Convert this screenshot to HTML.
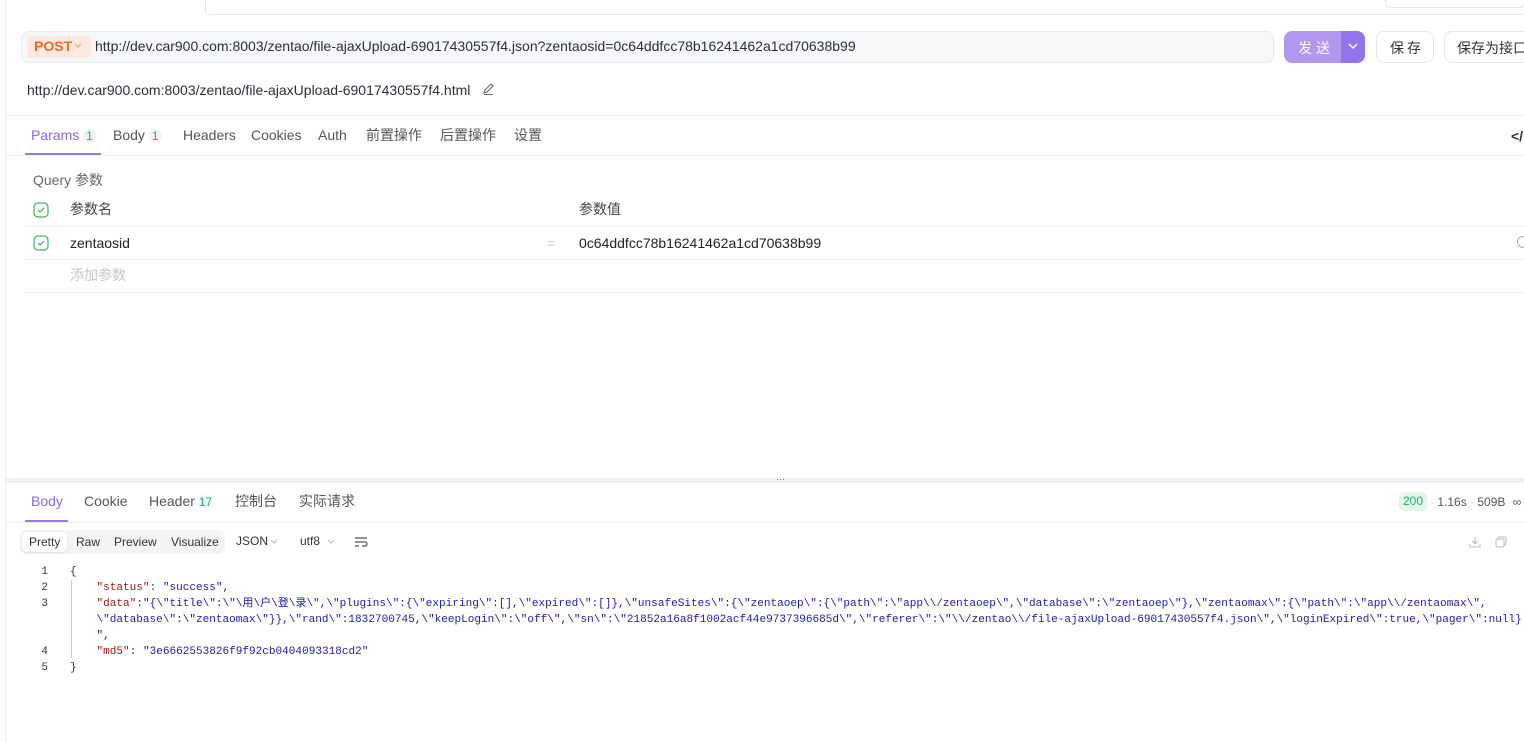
<!DOCTYPE html>
<html><head><meta charset="utf-8"><style>
*{box-sizing:border-box;margin:0;padding:0}
body{width:1524px;height:742px;overflow:hidden;background:#fff;font-family:"Liberation Sans","Noto Sans CJK SC",sans-serif;color:#3b3f4a;position:relative;font-size:14px}
.a{position:absolute;white-space:nowrap}
.code{font-family:"Liberation Mono","Noto Sans CJK SC",monospace;font-size:11.05px;color:#1c1ca8}
.k{color:#a31515}
.ln{color:#333;font-family:"Liberation Mono",monospace;font-size:11px;text-align:right;width:20px}
.t{top:127px;color:#555}
.b{top:493px;color:#555}
</style></head><body>
<div class="a" style="left:5px;top:0;width:1px;height:742px;background:#eceef1"></div>
<div class="a" style="left:205px;top:-6px;width:1330px;height:21px;border:1px solid #e6e8ec;border-radius:0 0 0 4px;background:#fff"></div>
<div class="a" style="left:1385px;top:-6px;width:140px;height:14px;border:1px solid #e3e5e9;border-radius:6px"></div>

<div class="a" style="left:21px;top:31px;width:1253px;height:32px;background:#f6f7f9;border:1px solid #e7e9ed;border-radius:8px"></div>
<div class="a" style="left:27px;top:36px;width:64px;height:22px;background:#fde9df;border-radius:4px"></div>
<div class="a" style="left:34px;top:38px;color:#f06a26;font-weight:bold;font-size:14px">POST</div>
<svg class="a" style="left:74px;top:43px" width="8" height="6"><path d="M1 1l3 3 3-3" stroke="#f0a070" fill="none"/></svg>
<div class="a" style="left:95px;top:38px;font-size:14px;color:#2b2f38">http://dev.car900.com:8003/zentao/file-ajaxUpload-69017430557f4.json?zentaosid=0c64ddfcc78b16241462a1cd70638b99</div>
<div class="a" style="left:1284px;top:31px;width:81px;height:32px;border-radius:8px;background:#b197f0;overflow:hidden"><div style="position:absolute;left:57px;top:0;width:24px;height:32px;background:#9474eb"></div></div>
<div class="a" style="left:1298px;top:38px;color:#fff;font-size:14px;letter-spacing:4px">发送</div>
<svg class="a" style="left:1347px;top:42px" width="12" height="8"><path d="M2 2l4 4 4-4" stroke="#fff" stroke-width="1.5" fill="none"/></svg>
<div class="a" style="left:1376px;top:31px;width:58px;height:32px;border:1px solid #e5e7eb;border-radius:8px"></div>
<div class="a" style="left:1390px;top:38px;font-size:14px;letter-spacing:3px;color:#333">保存</div>
<div class="a" style="left:1444px;top:31px;width:100px;height:32px;border:1px solid #e5e7eb;border-radius:8px"></div>
<div class="a" style="left:1457px;top:38px;font-size:14px;color:#333">保存为接口</div>

<div class="a" style="left:27px;top:82px;font-size:14px;color:#2b2f38">http://dev.car900.com:8003/zentao/file-ajaxUpload-69017430557f4.html</div>
<svg class="a" style="left:481px;top:82px" width="14" height="14"><path d="M3 11l1-3 6-6 2 2-6 6zM3 12.5h9" stroke="#666" stroke-width="1.1" fill="none"/></svg>

<div class="a" style="left:5px;top:115px;width:1519px;height:1px;background:#eef0f2"></div>
<div class="a t" style="left:31px;color:#8b67e8">Params <span style="color:#1fb36b;background:#f1f3f5;border-radius:7px;padding:0 3px;font-size:12px">1</span></div>
<div class="a t" style="left:113px">Body <span style="color:#1fb36b;background:#f1f3f5;border-radius:7px;padding:0 3px;font-size:12px">1</span></div>
<div class="a t" style="left:183px">Headers</div>
<div class="a t" style="left:251px">Cookies</div>
<div class="a t" style="left:318px">Auth</div>
<div class="a t" style="left:366px;top:125px">前置操作</div>
<div class="a t" style="left:440px;top:125px">后置操作</div>
<div class="a t" style="left:514px;top:125px">设置</div>
<div class="a" style="left:1511px;top:128px;color:#333;font-weight:bold">&lt;/</div>
<div class="a" style="left:25px;top:153px;width:76px;height:2px;background:#9a78ea"></div>
<div class="a" style="left:5px;top:155px;width:1519px;height:1px;background:#eef0f2"></div>

<div class="a" style="left:33px;top:170px;color:#666">Query 参数</div>
<svg class="a" style="left:33px;top:202px" width="16" height="16"><rect x="1" y="1" width="14" height="14" rx="4" fill="none" stroke="#3fb35f" stroke-width="1.2"/><path d="M5 8l2 2 4-4" stroke="#3fb35f" stroke-width="1.2" fill="none"/></svg>
<div class="a" style="left:70px;top:199px;color:#444">参数名</div>
<div class="a" style="left:579px;top:199px;color:#444">参数值</div>
<div class="a" style="left:25px;top:226px;width:1499px;height:1px;background:#eef0f2"></div>
<svg class="a" style="left:33px;top:235px" width="16" height="16"><rect x="1" y="1" width="14" height="14" rx="4" fill="none" stroke="#3fb35f" stroke-width="1.2"/><path d="M5 8l2 2 4-4" stroke="#3fb35f" stroke-width="1.2" fill="none"/></svg>
<div class="a" style="left:70px;top:235px;color:#222">zentaosid</div>
<div class="a" style="left:547px;top:235px;color:#ccc">=</div>
<div class="a" style="left:579px;top:235px;color:#222">0c64ddfcc78b16241462a1cd70638b99</div>
<div class="a" style="left:1517px;top:236px;width:12px;height:12px;border:1px solid #aaa;border-radius:50%"></div>
<div class="a" style="left:25px;top:259px;width:1499px;height:1px;background:#eef0f2"></div>
<div class="a" style="left:70px;top:265px;color:#c4c6ca">添加参数</div>
<div class="a" style="left:25px;top:292px;width:1499px;height:1px;background:#eef0f2"></div>

<div class="a" style="left:5px;top:478px;width:1519px;height:5px;background:#f0f1f4"></div>
<div class="a" style="left:776px;top:474px;color:#666;font-size:9px">···</div>

<div class="a b" style="left:31px;color:#8b67e8">Body</div>
<div class="a b" style="left:84px">Cookie</div>
<div class="a b" style="left:149px">Header <span style="color:#1fb36b;background:#f1f3f5;border-radius:7px;font-size:12px">17</span></div>
<div class="a b" style="left:235px;top:491px">控制台</div>
<div class="a b" style="left:299px;top:491px">实际请求</div>
<div class="a" style="left:25px;top:520px;width:43px;height:2px;background:#9a78ea"></div>
<div class="a" style="left:5px;top:522px;width:1519px;height:1px;background:#eef0f2"></div>
<div class="a" style="left:1399px;top:492px;width:28px;height:19px;background:#e2f6ec;border-radius:5px;color:#1fb36b;font-size:12px;text-align:center;line-height:19px">200</div>
<div class="a" style="left:1430px;top:495px;color:#555;font-size:12px"><span style="color:#ccc">·</span> 1.16s <span style="color:#ccc">·</span> 509B <span style="margin-left:4px">∞</span></div>

<div class="a" style="left:20px;top:530px;width:205px;height:24px;background:#f3f4f6;border-radius:6px"></div>
<div class="a" style="left:22px;top:532px;width:45px;height:20px;background:#fff;border-radius:5px;box-shadow:0 1px 2px rgba(0,0,0,.1)"></div>
<div class="a" style="left:29px;top:535px;font-size:12px;color:#333">Pretty</div>
<div class="a" style="left:76px;top:535px;font-size:12px;color:#333">Raw</div>
<div class="a" style="left:114px;top:535px;font-size:12px;color:#333">Preview</div>
<div class="a" style="left:171px;top:535px;font-size:12px;color:#333">Visualize</div>
<div class="a" style="left:236px;top:534px;font-size:12px;color:#333">JSON</div>
<svg class="a" style="left:270px;top:539px" width="8" height="6"><path d="M1 1l3 3 3-3" stroke="#bbb" fill="none"/></svg>
<div class="a" style="left:300px;top:534px;font-size:12px;color:#333">utf8</div>
<svg class="a" style="left:327px;top:539px" width="8" height="6"><path d="M1 1l3 3 3-3" stroke="#bbb" fill="none"/></svg>
<svg class="a" style="left:354px;top:536px" width="14" height="12"><path d="M1 2h12M1 6h10a2 2 0 010 4H8M1 10h4" stroke="#555" stroke-width="1.2" fill="none"/></svg>
<svg class="a" style="left:1468px;top:535px" width="14" height="14"><path d="M7 2v7M4 6l3 3 3-3M2 9v3h10V9" stroke="#bbb" fill="none"/></svg>
<svg class="a" style="left:1494px;top:535px" width="14" height="14"><rect x="4" y="2" width="8" height="8" rx="1.5" stroke="#bbb" fill="none"/><rect x="2" y="4" width="8" height="8" rx="1.5" stroke="#bbb" fill="#fff"/></svg>

<div class="a" style="left:71px;top:580px;width:1px;height:78px;background:#ccc"></div>
<div class="a ln" style="left:28px;top:564px;line-height:16px">1<br>2<br>3<br><br><br>4<br>5</div>
<div class="a code" style="left:70px;top:564px;line-height:16px"><span style="color:#333">{</span><br>
&nbsp;&nbsp;&nbsp;&nbsp;<span class="k">"status"</span><span style="color:#333">:</span> "success",<br>
&nbsp;&nbsp;&nbsp;&nbsp;<span class="k">"data"</span><span style="color:#333">:</span>"{\"title\":\"\用\户\登\录\",\"plugins\":{\"expiring\":[],\"expired\":[]},\"unsafeSites\":{\"zentaoep\":{\"path\":\"app\\/zentaoep\",\"database\":\"zentaoep\"},\"zentaomax\":{\"path\":\"app\\/zentaomax\",<br>
&nbsp;&nbsp;&nbsp;&nbsp;\"database\":\"zentaomax\"}},\"rand\":1832700745,\"keepLogin\":\"off\",\"sn\":\"21852a16a8f1002acf44e9737396685d\",\"referer\":\"\\/zentao\\/file-ajaxUpload-69017430557f4.json\",\"loginExpired\":true,\"pager\":null}<br>
&nbsp;&nbsp;&nbsp;&nbsp;",<br>
&nbsp;&nbsp;&nbsp;&nbsp;<span class="k">"md5"</span><span style="color:#333">:</span> "3e6662553826f9f92cb0404093318cd2"<br>
<span style="color:#333">}</span></div>
</body></html>
